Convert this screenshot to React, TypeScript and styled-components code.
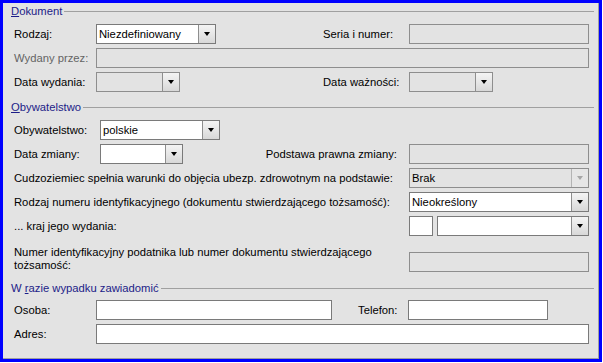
import styled, { createGlobalStyle } from "styled-components";

const GlobalStyle = createGlobalStyle`
  html, body {
    margin: 0;
    padding: 0;
    background: #fff;
  }
  * {
    box-sizing: border-box;
  }
`;

interface ComboProps {
  width?: number;
  value?: string;
  disabled?: boolean;
  muted?: boolean;
}

const Combo = ({ width, value, disabled, muted }: ComboProps) => (
  <ComboBox $w={width} $disabled={disabled}>
    <ComboText>{value}</ComboText>
    <DropButton $muted={muted}>
      <Arrow $muted={muted} />
    </DropButton>
  </ComboBox>
);

const App = () => {
  return (
    <>
      <GlobalStyle />
      <Frame>
        <Panel>
          <Section>
            <SectionHeader>
              <u>D</u>okument
            </SectionHeader>
            <Row>
              <Label $w={82}>Rodzaj:</Label>
              <Combo width={120} value="Niezdefiniowany" />
              <Right>
                <Label $w={86}>Seria i numer:</Label>
                <TextBox $w={180} $disabled />
              </Right>
            </Row>
            <Row>
              <Label $w={82} $disabled>
                Wydany przez:
              </Label>
              <TextBox $disabled />
            </Row>
            <Row>
              <Label $w={82}>Data wydania:</Label>
              <Combo width={84} disabled />
              <Right>
                <Label $w={86}>Data ważności:</Label>
                <Combo width={84} disabled />
              </Right>
            </Row>
          </Section>

          <Section $top={8}>
            <SectionHeader>
              <u>O</u>bywatelstwo
            </SectionHeader>
            <Row>
              <Label $w={86}>Obywatelstwo:</Label>
              <Combo width={120} value="polskie" />
            </Row>
            <Row>
              <Label $w={86}>Data zmiany:</Label>
              <Combo width={83} />
              <Label $align="right">Podstawa prawna zmiany:</Label>
              <TextBox $w={180} $disabled />
            </Row>
            <Row>
              <Label>
                Cudzoziemiec spełnia warunki do objęcia ubezp. zdrowotnym na
                podstawie:
              </Label>
              <Combo width={180} value="Brak" disabled muted />
            </Row>
            <Row>
              <Label>
                Rodzaj numeru identyfikacyjnego (dokumentu stwierdzającego
                tożsamość):
              </Label>
              <Combo width={180} value="Nieokreślony" />
            </Row>
            <Row>
              <Label>... kraj jego wydania:</Label>
              <TextBox $w={24} />
              <Gap />
              <Combo width={152} />
            </Row>
            <TallRow>
              <WrapLabel>
                Numer identyfikacyjny podatnika lub numer dokumentu
                stwierdzającego tożsamość:
              </WrapLabel>
              <TextBox $w={180} $disabled />
            </TallRow>
          </Section>

          <Section $top={9}>
            <SectionHeader $after={5}>
              W <u>r</u>azie wypadku zawiadomić
            </SectionHeader>
            <Row>
              <Label $w={82}>Osoba:</Label>
              <TextBox $w={236} />
              <Label $w={50} $ml={26}>
                Telefon:
              </Label>
              <TextBox $w={140} />
            </Row>
            <Row>
              <Label $w={82}>Adres:</Label>
              <TextBox />
            </Row>
          </Section>
        </Panel>
      </Frame>
    </>
  );
};

export default App;

const Frame = styled.div`
  width: 602px;
  height: 362px;
  border: 3px solid #0000ff;
  font-family: "Liberation Sans", Arial, sans-serif;
  font-size: 11.25px;
  color: #000;
`;

const Panel = styled.div`
  height: 100%;
  background: #e3e3e3;
  border-right: 1px solid #a0a0a0;
  border-bottom: 1px solid #a0a0a0;
  display: flex;
  flex-direction: column;
  padding-top: 1px;
`;

const Section = styled.div<{ $top?: number }>`
  display: flex;
  flex-direction: column;
  gap: 4px;
  margin-top: ${(p) => p.$top ?? 0}px;
  padding: 0 9px 0 11px;
`;

const SectionHeader = styled.div<{ $after?: number }>`
  display: flex;
  align-items: center;
  height: 14px;
  margin: 0 -5px ${(p) => (p.$after ?? 6) - 4}px -3px;
  color: #1c1c88;
  white-space: pre;

  u {
    text-decoration-thickness: 1px;
    text-underline-offset: 1px;
  }

  &::after {
    content: "";
    flex: 1;
    height: 1px;
    margin-left: 2px;
    background: #a0a0a0;
  }
`;

const Row = styled.div`
  display: flex;
  align-items: center;
  height: 20px;
`;

const TallRow = styled.div`
  display: flex;
  align-items: flex-end;
  margin-top: 6px;
`;

const Right = styled.div`
  display: flex;
  align-items: center;
  margin-left: auto;
  width: 266px;
`;

const Gap = styled.div`
  width: 4px;
`;

const Label = styled.div<{
  $w?: number;
  $disabled?: boolean;
  $align?: "left" | "right";
  $ml?: number;
}>`
  ${(p) => (p.$w ? `width: ${p.$w}px; flex: none;` : "flex: 1;")}
  margin-left: ${(p) => p.$ml ?? 0}px;
  padding-right: ${(p) => (p.$align === "right" ? 12 : 0)}px;
  text-align: ${(p) => p.$align ?? "left"};
  color: ${(p) => (p.$disabled ? "#646464" : "#000")};
  white-space: nowrap;
`;

const WrapLabel = styled.div`
  flex: 1;
  padding-right: 20px;
  line-height: 13px;
`;

const TextBox = styled.div<{ $w?: number; $disabled?: boolean }>`
  ${(p) => (p.$w ? `width: ${p.$w}px; flex: none;` : "flex: 1;")}
  height: 20px;
  border: 1px solid ${(p) => (p.$disabled ? "#8e8e8e" : "#7a7a7a")};
  background: ${(p) => (p.$disabled ? "#e3e3e3" : "#fff")};
`;

const ComboBox = styled.div<{ $w?: number; $disabled?: boolean }>`
  display: flex;
  width: ${(p) => p.$w ?? 120}px;
  flex: none;
  height: 20px;
  border: 1px solid ${(p) => (p.$disabled ? "#8e8e8e" : "#7a7a7a")};
  background: ${(p) => (p.$disabled ? "#e3e3e3" : "#fff")};
`;

const ComboText = styled.div`
  flex: 1;
  padding-left: 2px;
  line-height: 18px;
  white-space: nowrap;
  overflow: hidden;
`;

const DropButton = styled.div<{ $muted?: boolean }>`
  width: 17px;
  flex: none;
  display: flex;
  align-items: center;
  justify-content: center;
  border-left: 1px solid ${(p) => (p.$muted ? "#b4b4b4" : "#8e8e8e")};
  background: ${(p) =>
    p.$muted ? "#e6e6e6" : "linear-gradient(#f4f4f4, #d8d8d8)"};
`;

const Arrow = styled.div<{ $muted?: boolean }>`
  width: 0;
  height: 0;
  border-left: 3.5px solid transparent;
  border-right: 3.5px solid transparent;
  border-top: 4px solid ${(p) => (p.$muted ? "#a6a6a6" : "#000")};
`;
